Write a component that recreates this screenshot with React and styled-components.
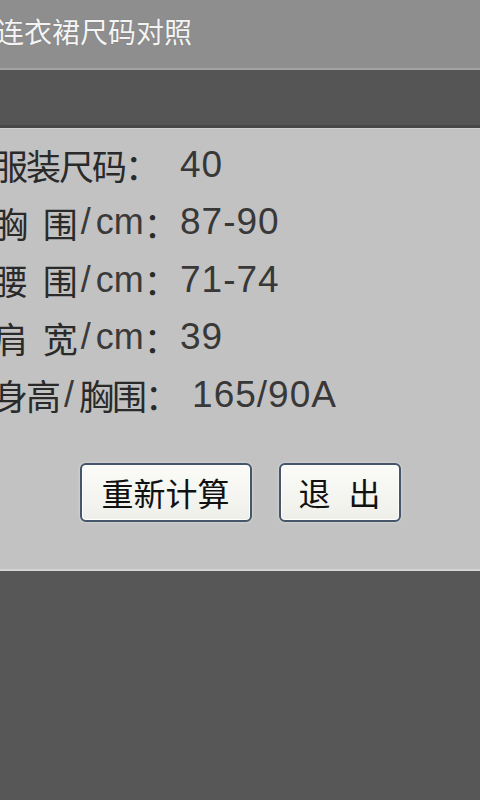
import styled, { createGlobalStyle } from "styled-components";

const GlobalStyle = createGlobalStyle`
  html, body {
    margin: 0;
    padding: 0;
    background-color: #565656;
  }
`;

const Page = styled.div`
  width: 480px;
  min-height: 800px;
  display: flex;
  flex-direction: column;
  overflow: hidden;
  font-family: "Liberation Sans", "Noto Sans CJK SC", sans-serif;
`;

const TitleBar = styled.div`
  height: 70px;
  display: flex;
  align-items: center;
  padding-bottom: 6px;
  box-sizing: border-box;
  background-color: #8e8e8e;
  border-bottom: 2px solid #a3a3a3;
  overflow: hidden;
`;

const Title = styled.h1`
  margin: 0 0 0 -4px;
  font-family: "Noto Sans CJK SC", sans-serif;
  font-size: 28px;
  font-weight: normal;
  color: #f4f4f4;
  white-space: nowrap;
  text-shadow: 0 0 1px #6a6a6a;
`;

const Band = styled.div`
  height: 55px;
  background-color: #555555;
  border-bottom: 3px solid #484848;
`;

const Panel = styled.div`
  height: 443px;
  display: flex;
  flex-direction: column;
  padding-top: 7px;
  box-sizing: border-box;
  background-color: #c2c2c2;
  border-top: 1px solid #cfcfcf;
  border-bottom: 2px solid #d4d4d4;
`;

const Row = styled.div`
  height: 57.5px;
  display: flex;
  align-items: center;
  margin-left: -7px;
  white-space: nowrap;
`;

const Label = styled.span`
  min-width: 184px;
  display: flex;
  align-items: center;
`;

const Han = styled.span`
  font-family: "Noto Sans CJK SC", sans-serif;
  font-size: 35px;
  letter-spacing: -2px;
  word-spacing: 11px;
  color: #2a2a2a;
`;

const Unit = styled.span`
  font-size: 36px;
  color: #3a3a3a;
`;

const Slash = styled(Unit)`
  padding: 0 5px;
`;

const Value = styled.span`
  margin-left: ${(p) => p.$gap}px;
  font-size: 37px;
  letter-spacing: 1px;
  color: #383838;
`;

const ButtonRow = styled.div`
  display: flex;
  justify-content: center;
  column-gap: 27px;
  margin-top: 39px;
`;

const Button = styled.button`
  width: ${(p) => p.$w}px;
  height: 59px;
  padding: 0;
  font-family: "Liberation Sans", "Noto Sans CJK SC", sans-serif;
  font-size: 32px;
  color: #111111;
  word-spacing: 9px;
  background: linear-gradient(#fbfbf8, #efefea);
  border: 2px solid #45566a;
  border-radius: 6px;
  box-shadow: inset 0 0 0 1px #ffffff, 0 0 3px rgba(255, 255, 255, 0.5);
`;

const Bottom = styled.div`
  flex: 1;
  background-color: #575757;
`;

const rows = [
  { name: ["服装尺码"], value: "40", gap: 3 },
  { name: ["胸 围"], unit: "cm", value: "87-90", gap: 3 },
  { name: ["腰 围"], unit: "cm", value: "71-74", gap: 3 },
  { name: ["肩 宽"], unit: "cm", value: "39", gap: 3 },
  { name: ["身高", "胸围"], value: "165/90A", gap: 14 },
];

function App() {
  return (
    <Page>
      <GlobalStyle />
      <TitleBar>
        <Title>连衣裙尺码对照</Title>
      </TitleBar>
      <Band />
      <Panel>
        {rows.map((r) => (
          <Row key={r.value}>
            <Label>
              <Han>{r.name[0]}</Han>
              {r.name[1] && (
                <>
                  <Slash>/</Slash>
                  <Han>{r.name[1]}</Han>
                </>
              )}
              {r.unit && (
                <>
                  <Slash>/</Slash>
                  <Unit>{r.unit}</Unit>
                </>
              )}
              <Han>：</Han>
            </Label>
            <Value $gap={r.gap}>{r.value}</Value>
          </Row>
        ))}
        <ButtonRow>
          <Button $w={172}>重新计算</Button>
          <Button $w={122}>退 出</Button>
        </ButtonRow>
      </Panel>
      <Bottom />
    </Page>
  );
}

export default App;
